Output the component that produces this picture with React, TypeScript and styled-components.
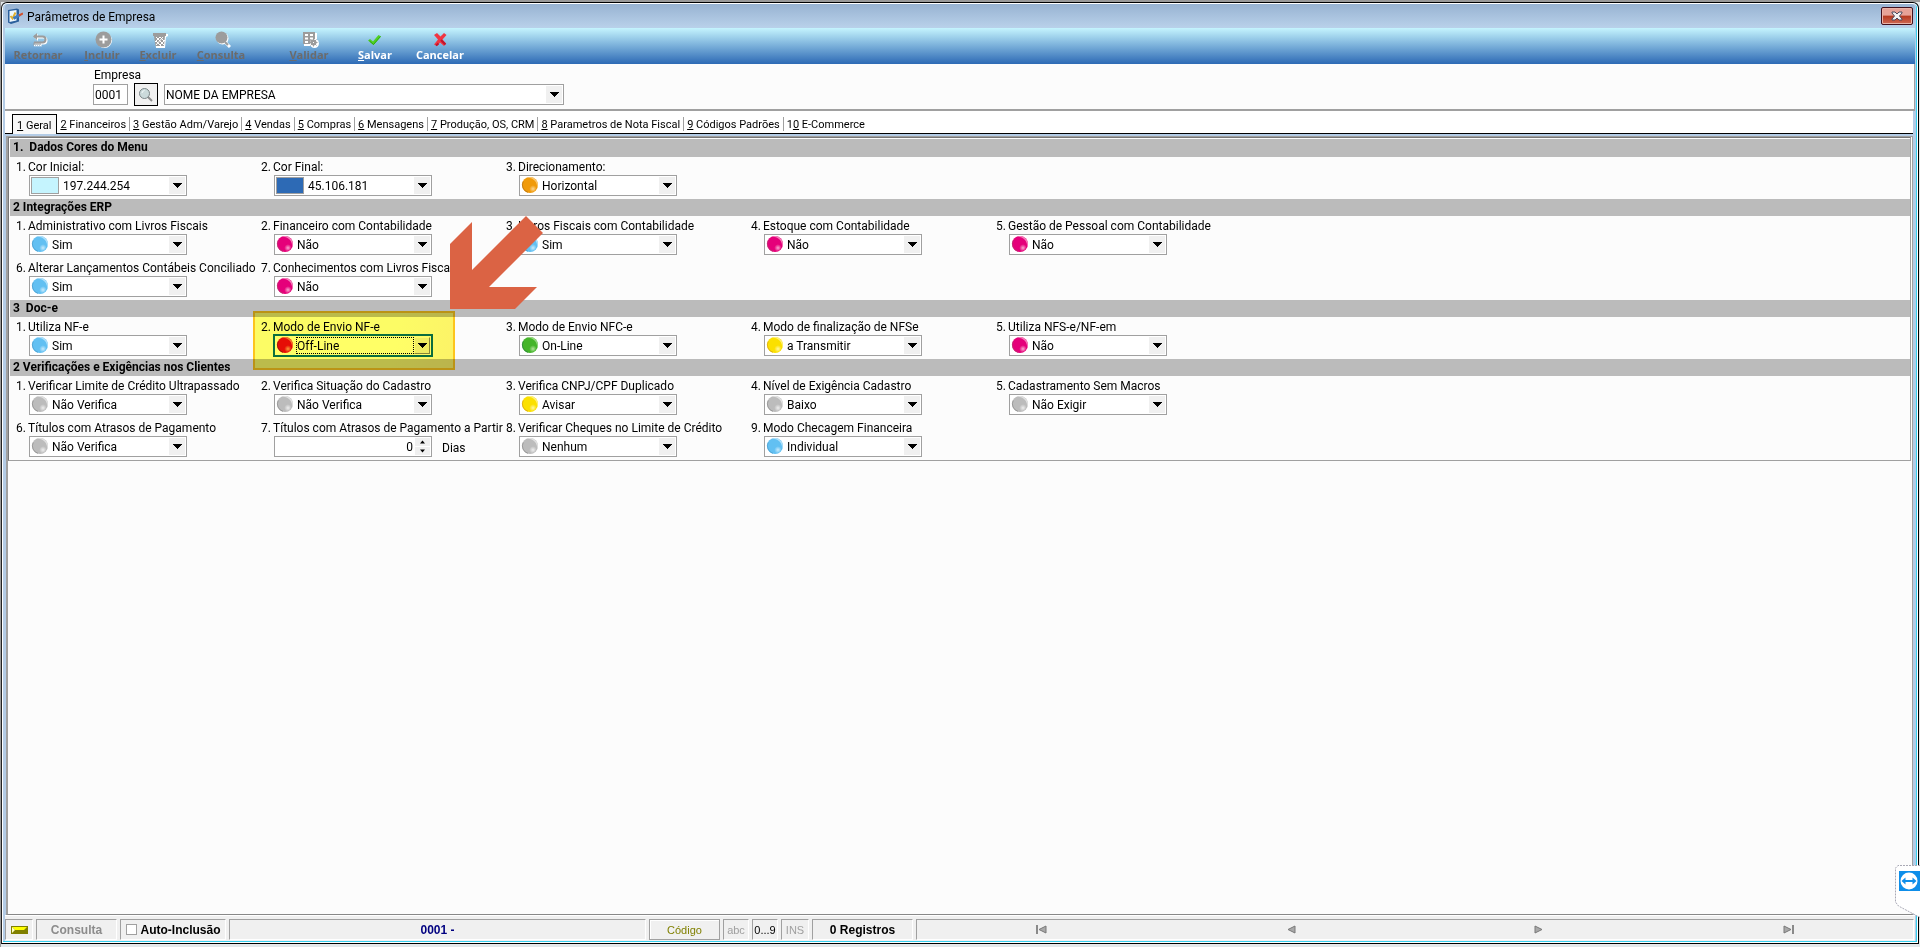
import React, { useId, useState } from 'react';
import styled, { createGlobalStyle, css } from 'styled-components';

const ui = 'Roboto, "Open Sans", sans-serif';
const classic = '"Liberation Sans", Arial, sans-serif';

const GlobalStyle = createGlobalStyle`
  *, *::before, *::after { box-sizing: border-box; }
  body { margin: 0; background: #e4e8ea; font: 12px/16px ${ui}; color: #000; }
  button, input, select { font: inherit; color: inherit; margin: 0; border-radius: 0; }
`;

/* ---------- window ---------- */

const Desktop = styled.div`
  display: flex;
  min-height: 100vh;
  padding: 0 1px 3px 0;
  border-top: 2px solid #9a9a9a;
  border-left: 1px solid #9a9a9a;
  background: #e4e8ea;
`;

const Frame = styled.div`
  flex: 1;
  min-width: 0;
  display: flex;
  flex-direction: column;
  border: 1px solid #000;
  border-left-color: #222;
  border-radius: 6px 6px 0 0;
  box-shadow: inset 0 0 0 1px #fff, inset -2px -2px 0 #35cfee;
  background: #b4cce6;
  padding: 1px 3px 2px 3px;
`;

const TitleBar = styled.header`
  display: flex;
  align-items: center;
  gap: 4px;
  height: 24px;
  padding: 0 2px;
  background: linear-gradient(#98b3d2, #b9d1ea);
  border-radius: 4px 4px 0 0;
`;

const Title = styled.h1`
  flex: 1;
  margin: 0;
  padding-top: 2px;
  font-size: 12px;
  font-weight: 400;
`;

const CloseButton = styled.button`
  display: grid;
  place-items: center;
  width: 32px;
  height: 18px;
  padding: 0;
  border: 1px solid #43101c;
  border-radius: 2px;
  box-shadow: inset 0 0 0 1px #e9b3a8;
  background: linear-gradient(#e6a297 0 45%, #b5391f 50%, #cf6a55);
`;

/* ---------- toolbar ---------- */

const Toolbar = styled.nav`
  display: flex;
  height: 36px;
  background: linear-gradient(#c5f4fe, #2d6ab5);
`;

const ToolButton = styled.button<{ $width: number; $gap?: number }>`
  display: flex;
  flex-direction: column;
  align-items: center;
  width: ${p => p.$width}px;
  margin-left: ${p => p.$gap ?? 0}px;
  padding: 3px 0 0;
  border: 0;
  background: none;
  color: #fff;
  font-family: "Open Sans", "Noto Sans", sans-serif;
  font-size: 11px;
  font-weight: 700;
  line-height: 14px;
  &:disabled { color: #6b6b6b; }
  svg { margin-left: 3px; }
`;

/* ---------- company ---------- */

const CompanyBar = styled.section`
  display: flex;
  align-items: flex-end;
  gap: 6px;
  height: 47px;
  padding: 0 0 4px 88px;
  background: #fcfcfc;
  border-right: 1px solid #a0a0a0;
  border-bottom: 2px solid #a0a0a0;
`;

const CompanyCode = styled.div`
  display: flex;
  flex-direction: column;
  width: 35px;
  white-space: nowrap;
  label { padding-left: 1px; line-height: 18px; }
`;

const TextBox = styled.input`
  height: 21px;
  width: 100%;
  padding: 0 1px;
  border: 1px solid #a0a0a0;
  background: #fff;
`;

const SearchButton = styled.button`
  display: grid;
  place-items: center;
  width: 24px;
  height: 23px;
  margin-bottom: -1px;
  padding: 0;
  border: 1px solid #000;
  background: #f0f0f0;
`;

/* ---------- tabs ---------- */

const Tabs = styled.div`
  display: flex;
  height: 23px;
  margin-right: 2px;
  padding: 3px 0 0 7px;
  background: #fff;
  border-bottom: 1px solid #000;
  font-size: 11px;
`;

const Tab = styled.button<{ $active?: boolean }>`
  position: relative;
  height: 19px;
  padding: 0 4px 0 3px;
  border: 0;
  background: none;
  white-space: nowrap;
  line-height: 21px;
  &::after {
    content: '';
    position: absolute;
    right: 0;
    top: 3px;
    width: 1px;
    height: 14px;
    background: #a0a0a0;
  }
  &:last-child::after { content: none; }
  ${p => p.$active && css`
    height: 20px;
    padding: 0 5px 0 4px;
    border: 1px solid #000;
    border-bottom: 0;
    background: #f8f8f8;
    &::after { content: none; }
  `}
`;

/* ---------- tab page ---------- */

const Page = styled.main`
  flex: 1;
  margin: 2px 2px 0 1px;
  border: 1px solid #a0a0a0;
  border-width: 1px 1px 1px 2px;
  border-bottom-color: #888;
  background: #fcfcfc;
  padding: 0 1px 1px 0;
`;

const Sheet = styled.div`
  border: 1px solid #777;
  border-right-color: #a0a0a0;
  border-bottom-color: #a0a0a0;
  padding: 1px 0 0 1px;
  background: #fcfcfc;
`;

const SectionTitle = styled.h2<{ $first?: boolean }>`
  margin: 0;
  height: ${p => (p.$first ? 18 : 17)}px;
  padding-left: 3px;
  background: #bbb;
  font-size: 12px;
  font-weight: 700;
  line-height: 17px;
  white-space: pre;
`;

const Fields = styled.div`
  display: grid;
  grid-template-columns: repeat(5, 245px);
  padding-left: 6px;
`;

const Cell = styled.div`
  position: relative;
  height: 42px;
`;

const FieldLabel = styled.label`
  display: flex;
  height: 18px;
  line-height: 20px;
  white-space: nowrap;
  span { flex: none; width: 12px; }
`;

const Line = styled.div`
  display: flex;
  align-items: center;
  padding-left: 13px;
`;

const Combo = styled.div<{ $wide?: boolean; $focused?: boolean }>`
  display: flex;
  align-items: center;
  width: ${p => (p.$wide ? 400 : 158)}px;
  height: 21px;
  padding: 1px;
  border: 1px solid #a0a0a0;
  background: #fff;
  ${p => p.$focused && css`
    border-color: #0b6f9a;
    box-shadow: 0 0 0 1px #0b6f9a;
  `}
  svg { flex: none; }
`;

const Select = styled.select<{ $focused?: boolean; $plain?: boolean }>`
  flex: 1;
  min-width: 0;
  height: 17px;
  margin-left: ${p => (p.$plain ? 0 : 3)}px;
  padding: 1px 0 0 ${p => (p.$plain ? 0 : 1)}px;
  border: 0;
  outline: none;
  appearance: none;
  background: none;
  line-height: 16px;
  ${p => p.$focused && css`outline: 1px dotted #000; outline-offset: -1px;`}
`;

const DropMark = styled.span<{ $raised?: boolean }>`
  display: grid;
  place-items: center;
  width: 16px;
  height: 17px;
  background: #f0f0f0;
  pointer-events: none;
  ${p => p.$raised && css`border: 1px solid #fff; border-right-color: #888; border-bottom-color: #888;`}
`;

const Swatch = styled.span<{ $color: string }>`
  width: 28px;
  height: 17px;
  border: 1px solid #a0a0a0;
  background: ${p => p.$color};
`;

const Spinner = styled.div`
  display: flex;
  width: 158px;
  height: 21px;
  padding: 1px;
  border: 1px solid #a0a0a0;
  background: #fff;
  input {
    flex: 1;
    min-width: 0;
    padding: 0 2px;
    border: 0;
    background: none;
    text-align: right;
    appearance: textfield;
  }
  input::-webkit-inner-spin-button { display: none; }
`;

const SpinButtons = styled.div`
  display: grid;
  grid-template-rows: 1fr 1fr;
  gap: 1px;
  width: 15px;
  button { display: grid; place-items: center; padding: 0; border: 0; background: #f0f0f0; }
`;

const Unit = styled.span`
  padding: 2px 0 0 10px;
`;

/* Call-outs that point at one of the fields */

const Highlight = styled.div`
  position: absolute;
  left: -8px;
  top: -6px;
  width: 202px;
  height: 59px;
  border: 2px solid #ffc81e;
  background: linear-gradient(100deg, #ffff66 70%, #fff668);
  mix-blend-mode: multiply;
  pointer-events: none;
`;

const Pointer = styled.svg`
  position: absolute;
  left: 189px;
  top: -101px;
  pointer-events: none;
`;

/* ---------- status bar ---------- */

const StatusBar = styled.footer`
  display: flex;
  gap: 3px;
  height: 26px;
  padding: 3px 1px 1px 0;
  background: #f0f0f0;
  border-top: 1px solid #fff;
  font-family: ${classic};
  font-size: 11px;
`;

const Panel = styled.div<{ $width?: number; $bold?: boolean; $color?: string }>`
  display: flex;
  align-items: center;
  justify-content: center;
  ${p => (p.$width ? `width: ${p.$width}px; flex: none;` : 'flex: 1;')}
  border: 1px solid #a0a0a0;
  border-right-color: #fff;
  border-bottom-color: #fff;
  white-space: pre;
  color: ${p => p.$color ?? '#000'};
  ${p => p.$bold && 'font-weight: 700; font-size: 12px;'}
  label { display: flex; align-items: center; gap: 4px; }
`;

const CodeButton = styled.button`
  width: 71px;
  padding: 0;
  color: #808000;
  background: #f0f0f0;
  border: 1px solid #a0a0a0;
  box-shadow: inset 1px 1px 0 #fff;
`;

const CheckBox = styled.input`
  appearance: none;
  width: 11px;
  height: 11px;
  border: 1px solid #a0a0a0;
  background: #fff;
  &:checked { background: #444; }
`;

const Navigator = styled.div`
  flex: 1 0 580px;
  display: grid;
  grid-template-columns: repeat(4, 1fr);
  border: 1px solid #a0a0a0;
  border-right-color: #fff;
  border-bottom-color: #fff;
  button { display: grid; place-items: center; padding: 0; border: 0; background: none; }
`;

const MiddlePanel = styled(Panel)`
  flex: 0 1 417px;
`;

const SideTab = styled.a`
  position: fixed;
  right: 0;
  bottom: 29px;
  width: 25px;
  height: 53px;
  svg { display: block; }
`;

/* ---------- drawings ---------- */

const balls = {
  blue: ['#62c0f2', '#c9ebfc', '#4b9fd0'],
  pink: ['#e5007a', '#f9a9cf', '#b8336f'],
  orange: ['#f09a0a', '#fcd591', '#b87414'],
  red: ['#e60d0d', '#f99a86', '#8f1515'],
  green: ['#45b52a', '#b2e39c', '#2c8340'],
  yellow: ['#fbe000', '#fff7a4', '#d9a514'],
  gray: ['#bcbcbc', '#eeeeee', '#8f8f8f'],
} as const;
type BallColor = keyof typeof balls;

const Ball = ({ color }: { color: BallColor }) => {
  const id = useId();
  const [base, light, edge] = balls[color];
  return (
    <svg width="17" height="17" viewBox="-1 0 17 17" aria-hidden="true">
      <defs>
        <radialGradient id={id} cx="0.68" cy="0.72" r="0.42">
          <stop offset="0" stopColor={light} />
          <stop offset="0.8" stopColor={base} />
        </radialGradient>
      </defs>
      <circle cx="8" cy="8" r="8" fill={base} />
      <path d="M5 .8A7.600 7.600 0 0 1 15 11 9 9 0 0 0 5 .8Z" fill={light} opacity=".75" />
      <path d="M1.200 4.500A7.600 7.600 0 0 0 6 15.300" fill="none" stroke={edge} strokeWidth="1" opacity=".8" />
      <circle cx="9" cy="9.500" r="5.500" fill={`url(#${id})`} />
    </svg>
  );
};

const Arrow = () => (
  <svg width="9" height="5" viewBox="0 0 9 5" shapeRendering="crispEdges" aria-hidden="true">
    <path d="M0 0h9L4.500 5Z" />
  </svg>
);

const SmallArrow = ({ up }: { up?: boolean }) => (
  <svg width="7" height="4" viewBox="0 0 7 4" aria-hidden="true">
    <path d={up ? 'M1 3.500h5L3.500 .5Z' : 'M1 .5h5L3.500 3.500Z'} />
  </svg>
);

const Icon = ({ children }: { children: React.ReactNode }) => (
  <svg width="17" height="17" viewBox="0 0 17 17" fill="none" aria-hidden="true">{children}</svg>
);

const ReturnShape = ({ c }: { c: string }) => (
  <g stroke={c} strokeWidth="2">
    <path d="M3 5.500h8.500q3 0 3 3t-3 3h-2" />
    <path d="M6 2 2 5.500 6 9Z" fill={c} stroke="none" />
    <path d="M3 11.500v3m2-3v3m2-3v3m2-3v3" strokeWidth="1" />
    <path d="M3 11.500h7" />
  </g>
);

const icons = {
  back: <Icon><g transform="translate(1 1)"><ReturnShape c="#fff" /></g><ReturnShape c="#9c9c9c" /><path d="M3 14.500h1m1 0h1m1 0h1m1 0h1" stroke="#fff" /></Icon>,
  add: <Icon><circle cx="9.500" cy="9.500" r="7.500" fill="#fff" /><circle cx="8.500" cy="8.500" r="8" fill="#9c9c9c" /><path d="M8.500 4.500v8m-4-4h8" stroke="#fff" strokeWidth="2" /></Icon>,
  trash: <Icon><path d="M3 3h14v2l-2 1-1 11H5L4 6Z" fill="#fff" /><path d="M2 2h13v3H2Z" fill="#9c9c9c" /><path d="M3 5h11l-1 10H4.500Z" fill="#9c9c9c" /><path d="m5 6 8 8m-8-4 5 5m-1-9 4 4m-1-4-7 8m9-5-5 5M9 6l-5 5" stroke="#fff" strokeWidth="1" /></Icon>,
  find: <Icon><path d="m12 12 4 4" stroke="#fff" strokeWidth="3" /><circle cx="8.500" cy="7.500" r="6" fill="#fff" /><circle cx="7.500" cy="6.500" r="6" fill="#9c9c9c" /><path d="m11 11 3 3" stroke="#9c9c9c" strokeWidth="2" /></Icon>,
  grid: <Icon><path d="M2 2h13v13H2Z" fill="#fff" /><path d="M1 1h12v12H1Z" fill="#9c9c9c" /><path d="M3 3h3v2H3Zm5 0h3v2H8ZM3 6.500h3v2H3Zm5 0h3v2H8ZM3 10h3v2H3Z" fill="#fff" /><circle cx="12.500" cy="12.500" r="4.500" fill="#fff" /><circle cx="11.500" cy="11.500" r="3" fill="#9c9c9c" /><path d="M11.500 7.500v8m-4-4h8m-7-3 6 6m0-6-6 6" stroke="#9c9c9c" strokeWidth="1" /><path d="M11 11h1v1h-1Z" fill="#fff" /></Icon>,
  ok: <Icon><path d="m0 9.500 2-1.500 3 2.500L10.500 4 13 5.500 5.500 14Z" fill="#4fd022" /><path d="m1.500 10 4 3.500L12.500 5.500" stroke="#2ea80c" strokeWidth="1" /></Icon>,
  cancel: <Icon><path d="m1 4 3-2 3.500 3.500L11 2l2.500 2-4 4.500 3.500 4-2 2.500-4-3.500L4 15l-3-1.500 4-5Z" fill="#f03542" /><path d="m8 9 4.500 4.500m-7-1L3 14.500" stroke="#c0142c" strokeWidth="2" /></Icon>,
};

const FormIcon = () => (
  <svg width="16" height="16" viewBox="0 0 16 16" fill="none" aria-hidden="true">
    <path d="m1 2 9-1.500 2 1v12L4 16l-3-1.500Z" fill="#2b5f9c" />
    <path d="m2.500 3 7-1v10.500l-7 1.500Z" fill="#eef7fd" />
    <path d="m3.500 8 2 2.500 3-6" stroke="#e0b030" strokeWidth="2" />
    <path d="m6.500 10.500 6-3.500" stroke="#3f79c0" strokeWidth="3" />
    <path d="m12 7.500 4-2" stroke="#d2502f" strokeWidth="2" />
  </svg>
);

const MagnifierIcon = () => (
  <svg width="16" height="16" viewBox="0 0 16 16" fill="none" aria-hidden="true">
    <path d="m10 10 4 4" stroke="#8d8d8d" strokeWidth="2" />
    <circle cx="6.500" cy="6.500" r="5" fill="#cbdadb" stroke="#7b8688" />
    <path d="M4 6q0-2 2.500-2.500" stroke="#f4fbfb" />
  </svg>
);

const CloseIcon = () => (
  <svg width="12" height="10" viewBox="0 0 12 10" aria-hidden="true">
    <path d="M1 1h3l2 2 2-2h3v1L8.500 5 11 8v1H8L6 7 4 9H1V8l2.500-3L1 2Z" fill="#f2f2f2" stroke="#4d4a5c" />
  </svg>
);

const NavIcon = ({ bar, back }: { bar?: boolean; back?: boolean }) => (
  <svg width="11" height="9" viewBox="0 0 11 9" fill="none" aria-hidden="true">
    <g transform={back ? 'matrix(-1 0 0 1 11 0)' : undefined}>
      <path d="M1 1v7l7-3.500Z" fill="#a8a8a8" stroke="#787878" />
      {bar && <path d="M10 0v9" stroke="#8a8a8a" strokeWidth="2" />}
    </g>
  </svg>
);

const LedIcon = () => (
  <svg width="17" height="8" viewBox="0 0 17 8" aria-hidden="true">
    <path d="M0 0h17v8H0Z" fill="#808000" />
    <path d="M1 1h15l-3 3H4Z" fill="#ffff00" />
    <path d="M1 1v6l3-3Z" fill="#ffffc0" />
  </svg>
);

/* ---------- data ---------- */

type Field = {
  n: number;
  label: string;
  value?: string;
  ball?: BallColor;
  swatch?: string;
  days?: boolean;
  marked?: boolean;
};

const sections: { title: string; fields: Field[] }[] = [
  {
    title: '1.  Dados Cores do Menu',
    fields: [
      { n: 1, label: 'Cor Inicial:', value: '197.244.254', swatch: '#c5f4fe' },
      { n: 2, label: 'Cor Final:', value: '45.106.181', swatch: '#2d6ab5' },
      { n: 3, label: 'Direcionamento:', value: 'Horizontal', ball: 'orange' },
    ],
  },
  {
    title: '2 Integrações ERP',
    fields: [
      { n: 1, label: 'Administrativo com Livros Fiscais', value: 'Sim', ball: 'blue' },
      { n: 2, label: 'Financeiro com Contabilidade', value: 'Não', ball: 'pink' },
      { n: 3, label: 'Livros Fiscais com Contabilidade', value: 'Sim', ball: 'blue' },
      { n: 4, label: 'Estoque com Contabilidade', value: 'Não', ball: 'pink' },
      { n: 5, label: 'Gestão de Pessoal com Contabilidade', value: 'Não', ball: 'pink' },
      { n: 6, label: 'Alterar Lançamentos Contábeis Conciliado', value: 'Sim', ball: 'blue' },
      { n: 7, label: 'Conhecimentos com Livros Fiscais', value: 'Não', ball: 'pink' },
    ],
  },
  {
    title: '3  Doc-e',
    fields: [
      { n: 1, label: 'Utiliza NF-e', value: 'Sim', ball: 'blue' },
      { n: 2, label: 'Modo de Envio NF-e', value: 'Off-Line', ball: 'red', marked: true },
      { n: 3, label: 'Modo de Envio NFC-e', value: 'On-Line', ball: 'green' },
      { n: 4, label: 'Modo de finalização de NFSe', value: 'a Transmitir', ball: 'yellow' },
      { n: 5, label: 'Utiliza NFS-e/NF-em', value: 'Não', ball: 'pink' },
    ],
  },
  {
    title: '2 Verificações e Exigências nos Clientes',
    fields: [
      { n: 1, label: 'Verificar Limite de Crédito Ultrapassado', value: 'Não Verifica', ball: 'gray' },
      { n: 2, label: 'Verifica Situação do Cadastro', value: 'Não Verifica', ball: 'gray' },
      { n: 3, label: 'Verifica CNPJ/CPF Duplicado', value: 'Avisar', ball: 'yellow' },
      { n: 4, label: 'Nível de Exigência Cadastro', value: 'Baixo', ball: 'gray' },
      { n: 5, label: 'Cadastramento Sem Macros', value: 'Não Exigir', ball: 'gray' },
      { n: 6, label: 'Títulos com Atrasos de Pagamento', value: 'Não Verifica', ball: 'gray' },
      { n: 7, label: 'Títulos com Atrasos de Pagamento a Partir', days: true },
      { n: 8, label: 'Verificar Cheques no Limite de Crédito', value: 'Nenhum', ball: 'gray' },
      { n: 9, label: 'Modo Checagem Financeira', value: 'Individual', ball: 'blue' },
    ],
  },
];

const tabs = [
  ['1', 'Geral'], ['2', 'Financeiros'], ['3', 'Gestão Adm/Varejo'], ['4', 'Vendas'], ['5', 'Compras'],
  ['6', 'Mensagens'], ['7', 'Produção, OS, CRM'], ['8', 'Parametros de Nota Fiscal'], ['9', 'Códigos Padrões'],
  ['10', 'E-Commerce'],
];

const tools: { text: string; icon: keyof typeof icons; width: number; gap?: number; on?: boolean; key?: boolean }[] = [
  { text: 'Retornar', icon: 'back', width: 66 },
  { text: 'Incluir', icon: 'add', width: 62, key: true },
  { text: 'Excluir', icon: 'trash', width: 50, key: true },
  { text: 'Consulta', icon: 'find', width: 76, key: true },
  { text: 'Validar', icon: 'grid', width: 76, gap: 12, key: true },
  { text: 'Salvar', icon: 'ok', width: 56, on: true, key: true },
  { text: 'Cancelar', icon: 'cancel', width: 74, on: true },
];

/* ---------- parts ---------- */

const DaysField = ({ id }: { id: string }) => {
  const [days, setDays] = useState(0);
  return (
    <>
      <Spinner>
        <input id={id} type="number" value={days} onChange={e => setDays(Number(e.target.value))} />
        <SpinButtons>
          <button aria-label="Aumentar" onClick={() => setDays(days + 1)}><SmallArrow up /></button>
          <button aria-label="Diminuir" onClick={() => setDays(days - 1)}><SmallArrow /></button>
        </SpinButtons>
      </Spinner>
      <Unit>Dias</Unit>
    </>
  );
};

const FieldCell = ({ field }: { field: Field }) => {
  const id = useId();
  return (
    <Cell>
      <FieldLabel htmlFor={id}><span>{field.n}.</span>{field.label}</FieldLabel>
      <Line>
        {field.days ? <DaysField id={id} /> : (
          <Combo $focused={field.marked}>
            {field.swatch && <Swatch $color={field.swatch} />}
            {field.ball && <Ball color={field.ball} />}
            <Select id={id} $focused={field.marked}><option>{field.value}</option></Select>
            <DropMark $raised={field.marked}><Arrow /></DropMark>
          </Combo>
        )}
      </Line>
      {field.marked && (
        <>
          <Highlight />
          <Pointer width="93" height="93" viewBox="0 0 93 93" aria-hidden="true">
            <path d="M0 28 22 6V54L76 0 93 17 39 71H87L65 93H0Z" fill="#db6344" />
          </Pointer>
        </>
      )}
    </Cell>
  );
};

export default function App() {
  return (
    <>
      <GlobalStyle />
      <Desktop>
        <Frame>
          <TitleBar>
            <FormIcon />
            <Title>Parâmetros de Empresa</Title>
            <CloseButton aria-label="Fechar"><CloseIcon /></CloseButton>
          </TitleBar>
          <Toolbar>
            {tools.map(t => (
              <ToolButton key={t.text} $width={t.width} $gap={t.gap} disabled={!t.on}>
                {icons[t.icon]}
                <span>{t.key ? <><u>{t.text[0]}</u>{t.text.slice(1)}</> : t.text}</span>
              </ToolButton>
            ))}
          </Toolbar>
          <CompanyBar>
            <CompanyCode>
              <label htmlFor="empresa">Empresa</label>
              <TextBox id="empresa" defaultValue="0001" />
            </CompanyCode>
            <SearchButton aria-label="Pesquisar"><MagnifierIcon /></SearchButton>
            <Combo $wide>
              <Select $plain aria-label="Nome da empresa"><option>NOME DA EMPRESA</option></Select>
              <DropMark><Arrow /></DropMark>
            </Combo>
          </CompanyBar>
          <Tabs role="tablist">
            {tabs.map(([n, text], i) => (
              <Tab key={n} role="tab" aria-selected={i === 0} $active={i === 0}>
                {n.slice(0, -1)}<u>{n.slice(-1)}</u> {text}
              </Tab>
            ))}
          </Tabs>
          <Page>
            <Sheet>
              {sections.map((s, i) => (
                <section key={s.title}>
                  <SectionTitle $first={i === 0}>{s.title}</SectionTitle>
                  <Fields>
                    {s.fields.map(f => <FieldCell key={f.n} field={f} />)}
                  </Fields>
                </section>
              ))}
            </Sheet>
          </Page>
          <StatusBar>
            <Panel $width={28}><LedIcon /></Panel>
            <Panel $width={81} $bold $color="#8c8c8c">Consulta</Panel>
            <Panel $width={106} $bold><label><CheckBox type="checkbox" />Auto-Inclusão</label></Panel>
            <MiddlePanel $bold $color="#000080">0001 -</MiddlePanel>
            <CodeButton>Código</CodeButton>
            <Panel $width={26} $color="#a0a0a0">abc</Panel>
            <Panel $width={26}>0...9</Panel>
            <Panel $width={28} $color="#a0a0a0">INS</Panel>
            <Panel $width={101} $bold>0 Registros</Panel>
            <Navigator>
              <button aria-label="Primeiro"><NavIcon bar back /></button>
              <button aria-label="Anterior"><NavIcon back /></button>
              <button aria-label="Próximo"><NavIcon /></button>
              <button aria-label="Último"><NavIcon bar /></button>
            </Navigator>
          </StatusBar>
        </Frame>
      </Desktop>
      <SideTab href="#" aria-label="Acesso remoto">
        <svg width="25" height="53" viewBox="0 0 25 53">
          <path d="M25 .5H3L.5 3v34l3 4L25 52.500" fill="#fff" stroke="#a9a9b5" strokeDasharray="2 1" />
          <path d="M4 6h21v20H4Z" fill="#0e8ee9" />
          <circle cx="14" cy="16" r="8.500" fill="#fff" />
          <path d="m6.500 16 4-3.500v2.500h7v-2.500l4 3.500-4 3.500V17h-7v2.500Z" fill="#0e8ee9" />
        </svg>
      </SideTab>
    </>
  );
}
